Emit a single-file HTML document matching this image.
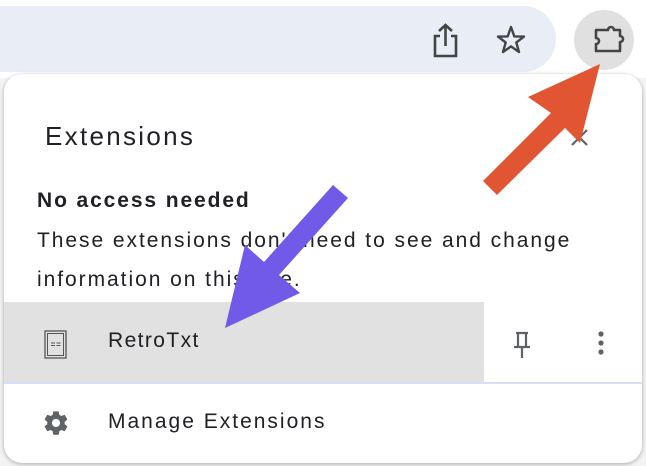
<!DOCTYPE html>
<html><head><style>
body{margin:0;width:646px;height:466px;overflow:hidden;background:#f3f3f3;font-family:"Liberation Sans",sans-serif;position:relative}
.top{position:absolute;left:0;top:0;width:646px;height:78px;background:#fff}
.bar{position:absolute;left:-30px;top:6px;width:586px;height:66px;background:#e9edf5;border-radius:33px}
.btn{position:absolute;left:574px;top:10px;width:60px;height:60px;border-radius:50%;background:#e0e0e0}
.pop{position:absolute;left:4px;top:74px;width:638px;height:389px;background:#fff;border-radius:18px;box-shadow:0 1px 4px rgba(0,0,0,.3);overflow:hidden}
.t{position:absolute;color:#202124;white-space:nowrap}
.hover{position:absolute;left:0;top:228px;width:480px;height:80px;background:#e1e1e1}
.line{position:absolute;left:0;top:308px;width:638px;height:2px;background:#d3e0f7}
</style></head><body>
<div class="top"></div>
<div class="bar"></div>
<svg style="position:absolute;left:430px;top:22px" width="100" height="40">
<path d="M10 14 H5 V34 H26 V14 H21 M15.5 24 V3 M9 9 L15.5 3 L22 9" fill="none" stroke="#444" stroke-width="2.6"/>
<path d="M81 5 L84.3 14.4 L94 14.6 L86.3 20.5 L89 30 L81 24.4 L73 30 L75.7 20.5 L68 14.6 L77.7 14.4 Z" fill="none" stroke="#444" stroke-width="2.4" stroke-linejoin="round"/>
</svg>
<div class="btn"></div>
<svg style="position:absolute;left:590px;top:18px" width="40" height="40">
<path d="M6 12 H18 a3 3 0 0 1 6 0 H30 V18 a3 3 0 0 1 0 6 V33 H6 V26 a3 3 0 0 0 0 -6 Z" fill="none" stroke="#444" stroke-width="2.6" stroke-linejoin="round"/>
</svg>
<div class="pop">
<div class="t" style="left:41px;top:47px;font-size:26px;letter-spacing:2.3px">Extensions</div>
<svg style="position:absolute;left:566px;top:54px" width="20" height="20"><path d="M2 2 L17 17 M17 2 L2 17" stroke="#5f6368" stroke-width="2.2"/></svg>
<div class="t" style="left:33px;top:115px;font-size:21px;font-weight:bold;letter-spacing:1.9px">No access needed</div>
<div class="t" style="left:33px;top:155px;font-size:21px;letter-spacing:1.95px">These extensions don't need to see and change</div>
<div class="t" style="left:33px;top:194px;font-size:21px;letter-spacing:1.95px">information on this site.</div>
<div class="hover"></div>
<div class="line"></div>
<svg style="position:absolute;left:40px;top:256px" width="24" height="30"><rect x="1" y="1" width="21" height="27" fill="none" stroke="#555" stroke-width="1.3"/><rect x="3.5" y="3.5" width="16" height="22" fill="none" stroke="#555" stroke-width="1"/><path d="M7 13 H11 M12.5 13 H16.5 M7 15.5 H11 M12.5 15.5 H16.5" stroke="#555" stroke-width="0.9"/></svg>
<div class="t" style="left:104px;top:255px;font-size:21px;letter-spacing:1.4px">RetroTxt</div>
<svg style="position:absolute;left:508px;top:256px" width="20" height="32"><path d="M4 3 H16 M6 3 V17 M14 3 V17 M2 17 H18 M10 17 V28" stroke="#5f6368" stroke-width="2.2" fill="none"/></svg>
<svg style="position:absolute;left:592px;top:256px" width="10" height="30"><circle cx="5" cy="4" r="2.6" fill="#5f6368"/><circle cx="5" cy="13" r="2.6" fill="#5f6368"/><circle cx="5" cy="22" r="2.6" fill="#5f6368"/></svg>
<svg style="position:absolute;left:38px;top:335px" width="28" height="28" viewBox="0 0 24 24"><path fill="#5f6368" d="M19.4 13c.04-.33.06-.66.06-1s-.02-.67-.07-1l2.1-1.650c.2-.15.24-.42.12-.64l-2-3.46c-.12-.22-.39-.3-.61-.22l-2.49 1c-.52-.4-1.080-.73-1.690-.98l-.38-2.650A.49.49 0 0 0 14 2h-4c-.25 0-.46.18-.49.42l-.38 2.65c-.61.25-1.17.59-1.69.98l-2.49-1c-.23-.09-.49 0-.61.22l-2 3.46c-.13.22-.07.49.12.64L4.57 11c-.04.33-.07.67-.07 1s.02.67.07 1l-2.11 1.65c-.19.15-.24.42-.12.64l2 3.46c.12.22.39.3.61.22l2.49-1c.52.4 1.08.73 1.69.98l.38 2.65c.03.24.24.42.49.42h4c.25 0 .46-.18.49-.42l.38-2.65c.61-.25 1.17-.59 1.69-.98l2.49 1c.23.09.49 0 .61-.22l2-3.46c.12-.22.07-.49-.12-.64L19.4 13zM12 15.5a3.5 3.5 0 1 1 0-7 3.5 3.5 0 0 1 0 7z"/></svg>
<div class="t" style="left:104px;top:336px;font-size:21px;letter-spacing:2px">Manage Extensions</div>
</div>
<svg style="position:absolute;left:0;top:0" width="646" height="466">
<polygon points="600,64 580,143 565,128 497,195 483,181 551,113 528,97" fill="#e25533"/>
<polygon points="225,328 245,245 264,262 333,185 348,198 279,275 300,293" fill="#725ae8"/>
</svg>
</body></html>
